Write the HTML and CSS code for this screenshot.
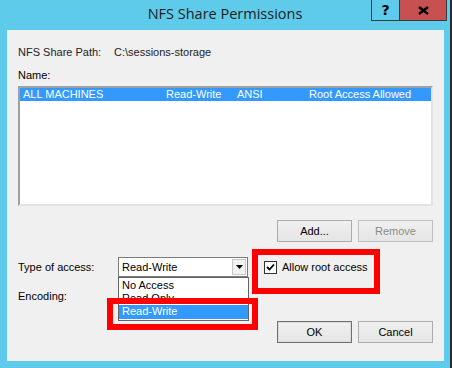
FILE: index.html
```html
<!DOCTYPE html>
<html lang="en">
<head>
  <meta charset="UTF-8">
  <title>NFS Share Permissions</title>
  <link rel="stylesheet" href="styles.css">
</head>
<body>

<div class="window">
  <div class="titlebar">
    <div class="title">NFS Share Permissions</div>
    <div class="caption-btns">
      <div class="cap-btn help">?</div>
      <div class="cap-btn close">
        <svg width="11" height="9" viewBox="0 0 11 9"><path d="M1 1 L10 8 M10 1 L1 8" stroke="#000" stroke-width="2.4"/></svg>
      </div>
    </div>
  </div>

  <div class="client">
    <div class="row path-row">
      <span class="label-path">NFS Share Path:</span>
      <span>C:\sessions-storage</span>
    </div>
    <div class="row name-row">Name:</div>

    <div class="listbox">
      <div class="list-item selected">
        <span class="col-name">ALL MACHINES</span>
        <span class="col-access">Read-Write</span>
        <span class="col-enc">ANSI</span>
        <span class="col-root">Root Access Allowed</span>
      </div>
    </div>

    <div class="btn-row top-btns">
      <div class="btn">Add...</div>
      <div class="btn disabled">Remove</div>
    </div>

    <div class="access-row">
      <span class="label">Type of access:</span>
      <div class="combo">
        <span class="combo-text">Read-Write</span>
        <span class="combo-arrow"><svg width="7" height="4" viewBox="0 0 7 4"><path d="M0 0 H7 L3.5 4 Z" fill="#000"/></svg></span>
        <div class="dropdown">
          <div class="dd-item">No Access</div>
          <div class="dd-item">Read Only</div>
          <div class="dd-item selected">Read-Write</div>
        </div>
      </div>
      <label class="check">
        <span class="box"><svg width="9" height="9" viewBox="0 0 9 9"><path d="M1 4 L3.5 6.5 L8 1.5" stroke="#000" stroke-width="1.8" fill="none"/></svg></span>
        Allow root access
      </label>
      <div class="mark mark-check"></div>
    </div>

    <div class="row enc-row">Encoding:</div>

    <div class="btn-row bottom-btns">
      <div class="btn default">OK</div>
      <div class="btn">Cancel</div>
    </div>

    <div class="mark mark-rw"></div>
  </div>
</div>

</body>
</html>
```

FILE: styles.css
```css
body {
  margin: 0;
  padding: 0;
  background: #5fcbea;
  font-family: "Liberation Sans", Arial, sans-serif;
  font-size: 11px;
  color: #000;
}
.window {
  width: 450px;
  height: 368px;
  background: #5fcbea;
  border-right: 2px solid #2c2c2c;
  display: flex;
  flex-direction: column;
}
.titlebar {
  height: 30px;
  position: relative;
  display: flex;
  justify-content: center;
}
.title {
  font-family: "Open Sans", "Noto Sans", sans-serif;
  font-size: 14.5px;
  color: #1d1d1d;
  margin-top: 4px;
}
.caption-btns {
  position: absolute;
  top: 0;
  right: 3px;
  display: flex;
}
.cap-btn {
  height: 20px;
  border: 1px solid #3a3a3a;
  border-top: none;
  display: flex;
  align-items: center;
  justify-content: center;
}
.help {
  width: 27px;
  border-right: none;
  font-weight: bold;
  font-size: 14px;
  font-family: "DejaVu Sans", sans-serif;
}
.close {
  width: 46px;
  background: #c75050;
}
.client {
  margin: 0 6px 7px 7px;
  height: 331px;
  background: #f0f0f0;
  padding: 0 11px;
  position: relative;
  display: flex;
  flex-direction: column;
}
.row {
  height: 13px;
  line-height: 13px;
}
.path-row {
  margin-top: 16px;
  display: flex;
  color: #222;
}
.label-path {
  width: 96px;
}
.name-row {
  margin-top: 10px;
}
.listbox {
  margin-top: 4px;
  height: 116px;
  background: #fff;
  border: 2px solid #a0a0a0;
  border-right-color: #e3e3e3;
  border-bottom-color: #e3e3e3;
}
.list-item {
  height: 13px;
  line-height: 13px;
  display: flex;
  padding-left: 3px;
}
.list-item.selected {
  background: #3399ff;
  color: #fff;
}
.col-name { width: 143px; }
.col-access { width: 71px; }
.col-enc { width: 72px; }
.btn-row {
  display: flex;
  justify-content: flex-end;
  gap: 6px;
}
.top-btns {
  margin-top: 14px;
}
.btn {
  width: 73px;
  height: 20px;
  line-height: 20px;
  text-align: center;
  border: 1px solid #acacac;
  background: linear-gradient(#f0f0f0, #e5e5e5);
}
.btn.disabled {
  color: #8a8a8a;
  border-color: #bfbfbf;
}
.btn.default {
  border-color: #707070;
  box-shadow: inset 0 0 0 1px #dadada;
}
.access-row {
  margin-top: 15px;
  height: 20px;
  display: flex;
  align-items: center;
  position: relative;
}
.label {
  width: 100px;
}
.combo {
  width: 128px;
  height: 18px;
  border: 1px solid #7a7a7a;
  background: #fff;
  display: flex;
  align-items: center;
  justify-content: space-between;
  position: relative;
}
.combo-text {
  padding-left: 3px;
}
.combo-arrow {
  width: 12px;
  height: 14px;
  margin-right: 1px;
  border: 1px solid #c8c8c8;
  background: #f2f2f2;
  display: flex;
  align-items: center;
  justify-content: center;
}
.dropdown {
  position: absolute;
  top: 19px;
  left: -1px;
  width: 129px;
  height: 41px;
  background: #fff;
  border: 1px solid #646464;
  padding-top: 1px;
}
.dd-item {
  height: 13px;
  line-height: 13px;
  padding-left: 3px;
}
.dd-item.selected {
  background: #3399ff;
  color: #fff;
  height: 14px;
}
.check {
  margin-left: 16px;
  display: flex;
  align-items: center;
  gap: 5px;
}
.box {
  width: 11px;
  height: 11px;
  border: 1px solid #333;
  background: #fff;
  display: flex;
  align-items: center;
  justify-content: center;
}
.mark {
  position: absolute;
  border: 6px solid #ff0000;
}
.mark-check {
  left: 234px;
  top: -8px;
  width: 116px;
  height: 33px;
}
.mark-rw {
  left: 100px;
  top: 268px;
  width: 139px;
  height: 20px;
}
.enc-row {
  margin-top: 13px;
}
.bottom-btns {
  margin-top: 18px;
}
```
